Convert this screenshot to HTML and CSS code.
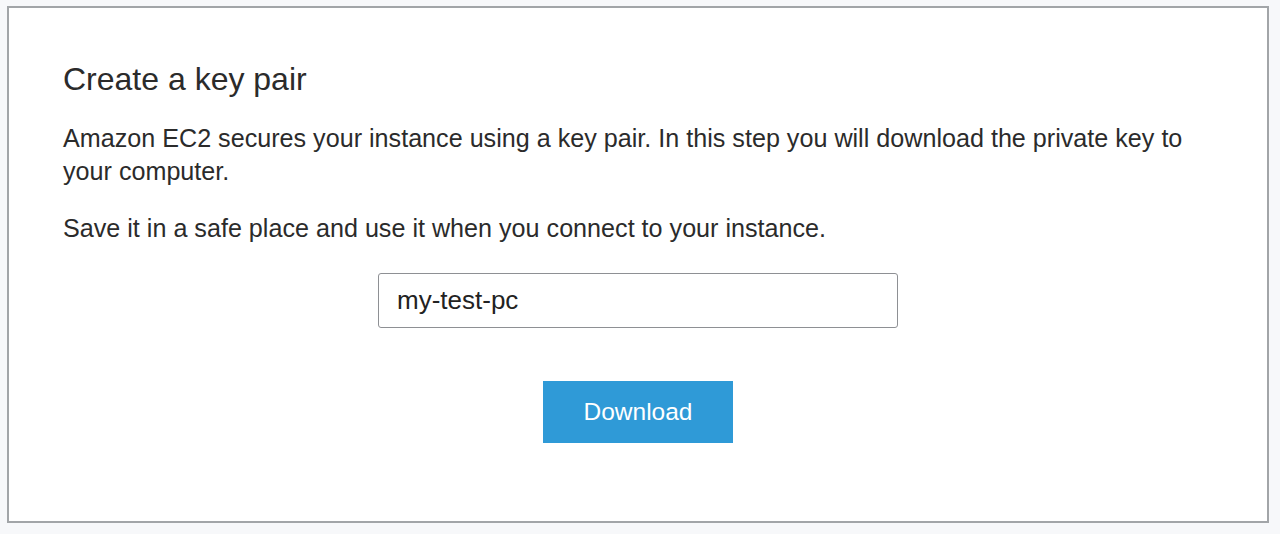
FILE: index.html
```html
<!DOCTYPE html>
<html>
<head>
<meta charset="utf-8">
<link rel="stylesheet" href="styles.css">
</head>
<body>
<div class="panel">
  <h1 class="title">Create a key pair</h1>
  <p class="text">Amazon EC2 secures your instance using a key pair. In this step you will download the private key to your computer.</p>
  <p class="text">Save it in a safe place and use it when you connect to your instance.</p>
  <div class="form">
    <input class="keyname" type="text" value="my-test-pc">
    <button class="download">Download</button>
  </div>
</div>
</body>
</html>
```

FILE: styles.css
```css
html, body {
  margin: 0;
  padding: 0;
  background: #f7f8fa;
}
body {
  padding: 6px 11px 0 7px;
  font-family: "Liberation Sans", Arial, Helvetica, sans-serif;
  color: #2b2b2b;
}
.panel {
  background: #fff;
  border: 2px solid #a2a5a8;
  padding: 51px 52px 78px 54px;
}
.title {
  margin: 0 0 23px 0;
  font-size: 32px;
  line-height: 40px;
  font-weight: normal;
  color: #2b2b2b;
}
.text {
  margin: 0 0 24px 0;
  font-size: 25.15px;
  line-height: 33px;
}
.form {
  display: flex;
  flex-direction: column;
  align-items: center;
  padding-top: 4px;
  margin-left: -2px;
}
.keyname {
  box-sizing: border-box;
  width: 520px;
  height: 55px;
  border: 1px solid #8e9094;
  border-radius: 3px;
  padding: 0 0 0 18px;
  font-family: "Liberation Sans", Arial, Helvetica, sans-serif;
  font-size: 26px;
  color: #222;
  background: #fff;
  outline: none;
}
.download {
  margin-top: 53px;
  width: 190px;
  height: 62px;
  border: none;
  background: #2f9ad7;
  color: #fff;
  font-family: "Liberation Sans", Arial, Helvetica, sans-serif;
  font-size: 24.5px;
  padding: 0;
  cursor: pointer;
}
```
